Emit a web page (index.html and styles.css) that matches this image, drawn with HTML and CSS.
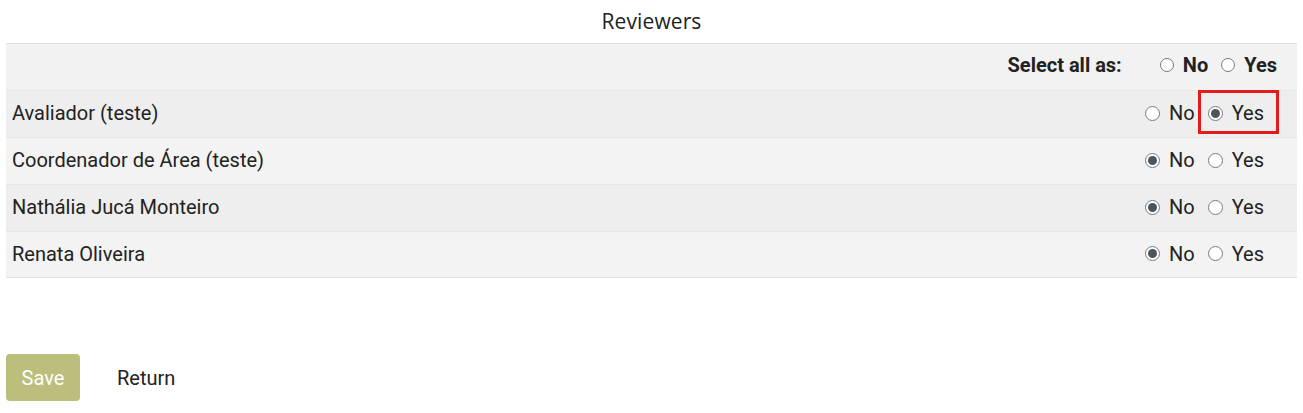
FILE: index.html
```html
<!DOCTYPE html>
<html>
<head>
<meta charset="utf-8">
<link rel="stylesheet" href="styles.css">
</head>
<body>
<div class="page">
  <h2 class="title">Reviewers</h2>
  <div class="table">
    <div class="row head">
      <div class="name"></div>
      <div class="choices head-choices">
        <span class="select-all">Select all as:</span>
        <label class="opt"><span class="radio"></span>No</label>
        <label class="opt"><span class="radio"></span>Yes</label>
      </div>
    </div>
    <div class="row dark">
      <div class="name">Avaliador (teste)</div>
      <div class="choices">
        <label class="opt"><span class="radio"></span>No</label>
        <label class="opt highlight"><span class="radio on"></span>Yes</label>
      </div>
    </div>
    <div class="row light">
      <div class="name">Coordenador de Área (teste)</div>
      <div class="choices">
        <label class="opt"><span class="radio on"></span>No</label>
        <label class="opt"><span class="radio"></span>Yes</label>
      </div>
    </div>
    <div class="row dark">
      <div class="name">Nathália Jucá Monteiro</div>
      <div class="choices">
        <label class="opt"><span class="radio on"></span>No</label>
        <label class="opt"><span class="radio"></span>Yes</label>
      </div>
    </div>
    <div class="row light last">
      <div class="name">Renata Oliveira</div>
      <div class="choices">
        <label class="opt"><span class="radio on"></span>No</label>
        <label class="opt"><span class="radio"></span>Yes</label>
      </div>
    </div>
  </div>
  <div class="actions">
    <button class="save">Save</button>
    <a class="return">Return</a>
  </div>
</div>
</body>
</html>
```
FILE: styles.css
```css
* { box-sizing: border-box; }
body {
  margin: 0;
  background: #fff;
  font-family: Roboto, "Liberation Sans", sans-serif;
  color: #222;
}
.page {
  padding: 0 6px;
}
.title {
  margin: 0;
  height: 43px;
  padding-top: 7px;
  text-align: center;
  font-family: "Open Sans", sans-serif;
  font-weight: 400;
  font-size: 21px;
  color: #222;
  letter-spacing: 0.1px;
}
.table {
  border-top: 1px solid #e2e2e2;
}
.row {
  display: flex;
  justify-content: space-between;
  align-items: center;
  height: 47px;
  font-size: 20px;
  border-bottom: 1px solid #e6e6e6;
  padding-bottom: 2px;
}
.row.head {
  background: #f2f2f2;
  font-weight: 700;
  padding-right: 20px;
  height: 47px;
  padding-bottom: 5px;
}
.row.dark { background: #eeeeee; }
.row.light { background: #f3f3f3; }
.row.last { border-bottom: 1px solid #e2e2e2; height: 46px; }
.name {
  padding-left: 6px;
}
.choices {
  display: flex;
  align-items: center;
  padding-right: 33px;
  height: 100%;
}
.head-choices {
  padding-right: 0;
  height: auto;
}
.select-all {
  margin-right: 38px;
}
.opt {
  display: flex;
  align-items: center;
  height: 100%;
  position: relative;
}
.opt + .opt { margin-left: 13px; }
.radio {
  width: 15px;
  height: 15px;
  border: 1px solid #7a7a7a;
  border-radius: 50%;
  background: #fff;
  margin-right: 9px;
  position: relative;
}
.head .radio {
  width: 14px;
  height: 14px;
}
.radio.on::after {
  content: "";
  position: absolute;
  left: 2px;
  top: 2px;
  width: 9px;
  height: 9px;
  border-radius: 50%;
  background: #4b555e;
}
.highlight::before {
  content: "";
  position: absolute;
  left: -10px;
  right: -15px;
  top: -1px;
  bottom: 1px;
  border: 3px solid #e31b1b;
}
.actions {
  display: flex;
  align-items: center;
  margin-top: 76px;
}
.save {
  width: 74px;
  height: 47px;
  border: none;
  border-radius: 4px;
  background: #bcbe7b;
  color: #fff;
  font-family: Roboto, sans-serif;
  font-size: 20px;
  padding: 0;
}
.return {
  margin-left: 37px;
  font-size: 20px;
  color: #222;
}
```
